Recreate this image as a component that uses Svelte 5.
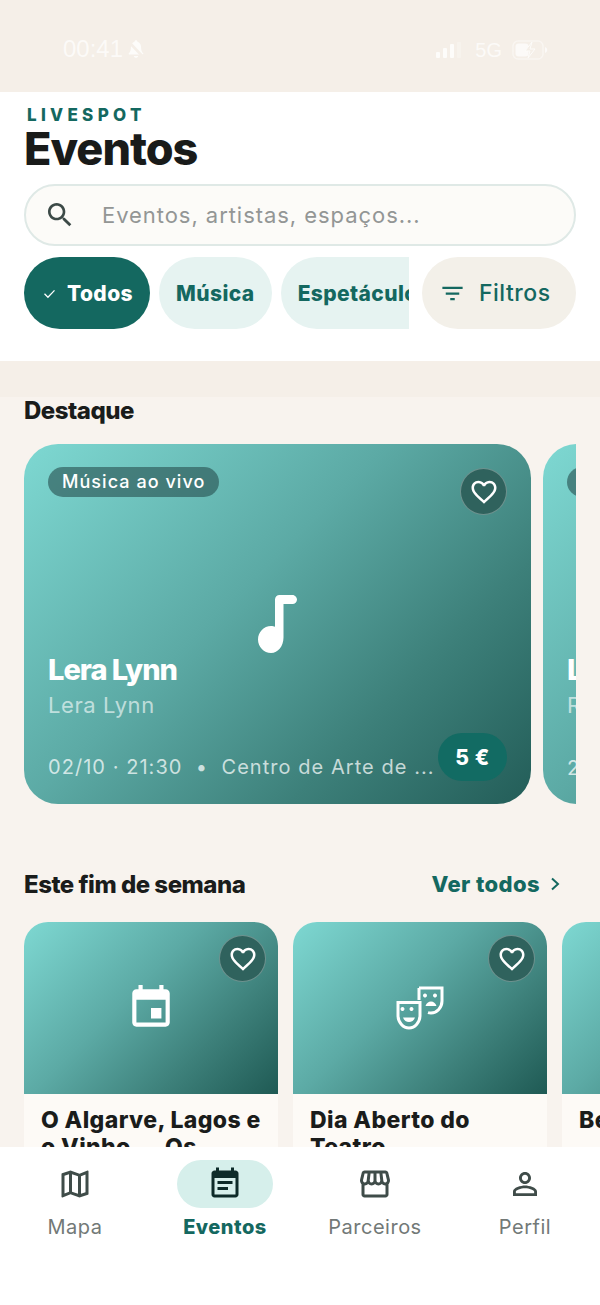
<script>
  const heartPath = "M16.5 3c-1.74 0-3.41.81-4.5 2.09C10.91 3.81 9.24 3 7.5 3 4.42 3 2 5.42 2 8.5c0 3.78 3.4 6.86 8.55 11.54L12 21.35l1.45-1.32C18.6 15.36 22 12.28 22 8.5 22 5.42 19.58 3 16.5 3zm-4.4 15.55l-.1.1-.1-.1C7.14 14.24 4 11.39 4 8.5 4 6.5 5.5 5 7.5 5c1.54 0 3.04.99 3.57 2.36h1.87C13.46 5.99 14.96 5 16.5 5c2 0 3.5 1.5 3.5 3.5 0 2.89-3.14 5.74-7.9 10.05z";
  const navItems = [
    { label: "Mapa", d: "M20.5 3l-.16.03L15 5.1 9 3 3.36 4.9c-.21.07-.36.25-.36.48V20.5c0 .28.22.5.5.5l.16-.03L9 18.9l6 2.1 5.64-1.9c.21-.07.36-.25.36-.48V3.5c0-.28-.22-.5-.5-.5zM10 5.47l4 1.4v11.66l-4-1.4V5.47zm-5 .99l3-1.01v11.7l-3 1.16V6.46zm14 11.08l-3 1.01V6.86l3-1.16v11.84z" },
    { label: "Eventos", active: true, d: "M17 10H7v2h10v-2zm2-7h-1V1h-2v2H8V1H6v2H5c-1.11 0-1.99.9-1.99 2L3 19c0 1.1.89 2 2 2h14c1.1 0 2-.9 2-2V5c0-1.1-.9-2-2-2zm0 16H5V8h14v11zm-5-5H7v2h7v-2z" },
    { label: "Parceiros", d: "M21.9 8.89l-1.05-4.37c-.22-.9-1-1.52-1.91-1.52H5.05c-.9 0-1.69.63-1.9 1.52L2.1 8.89c-.24 1.02-.02 2.06.62 2.88.08.11.19.19.28.29V19c0 1.1.9 2 2 2h14c1.1 0 2-.9 2-2v-6.94c.09-.09.2-.18.28-.28.64-.82.87-1.87.62-2.89zm-2.99-3.9l1.05 4.37c.1.42.01.84-.25 1.17-.14.18-.44.47-.94.47-.61 0-1.14-.49-1.21-1.14L16.98 5l1.93-.01zM13 5h1.96l.54 4.52c.05.39-.07.78-.33 1.07-.22.26-.54.41-.95.41-.67 0-1.22-.59-1.22-1.31V5zM8.49 9.52L9.04 5H11v4.69c0 .72-.55 1.31-1.29 1.31-.34 0-.65-.15-.89-.41-.25-.29-.37-.68-.33-1.07zm-4.45-.16L5.05 5h1.97l-.58 4.86c-.08.65-.6 1.14-1.21 1.14-.49 0-.8-.29-.93-.47-.27-.32-.36-.75-.26-1.17zM5 19v-6.03c.08.01.15.03.23.03.87 0 1.66-.36 2.24-.95.6.6 1.4.95 2.31.95.87 0 1.65-.36 2.23-.93.59.57 1.39.93 2.29.93.84 0 1.64-.35 2.24-.95.58.59 1.37.95 2.24.95.08 0 .15-.02.23-.03V19H5z" },
    { label: "Perfil", d: "M12 5.9c1.16 0 2.1.94 2.1 2.1s-.94 2.1-2.1 2.1S9.9 9.16 9.9 8s.94-2.1 2.1-2.1m0 9c2.97 0 6.1 1.46 6.1 2.1v1.1H5.9V17c0-.64 3.13-2.1 6.1-2.1M12 4C9.79 4 8 5.79 8 8s1.79 4 4 4 4-1.79 4-4-1.79-4-4-4zm0 9c-2.67 0-8 1.34-8 4v3h16v-3c0-2.66-5.33-4-8-4z" }
  ];
</script>

{#snippet heart()}
  <button class="fav" aria-label="Favorito">
    <svg class="heart" viewBox="0 0 24 24"><path d={heartPath} /></svg>
  </button>
{/snippet}

<div class="phone">
  <div class="status">
    <div class="status-left">
      <span class="time">00:41</span>
      <svg class="bell" viewBox="0 0 24 24">
        <path d="M12 2.5c-.9 0-1.5.7-1.6 1.5C7.9 4.8 6.5 7 6.5 9.6c0 3.6-.8 5.6-2.3 7.1-.5.5-.2 1.3.5 1.3h14.6c.7 0 1-.8.5-1.3-1.5-1.5-2.3-3.5-2.3-7.1 0-2.6-1.4-4.8-3.9-5.6-.1-.8-.7-1.5-1.6-1.5zM9.6 19.5c.2 1.2 1.2 2 2.4 2s2.2-.8 2.4-2z" />
        <path class="slash" d="M3 3l18 19" />
      </svg>
    </div>
    <div class="status-right">
      <svg class="signal" viewBox="0 0 26 16">
        <rect x="0" y="10" width="4" height="6" rx="1" />
        <rect x="7" y="6" width="4" height="10" rx="1" />
        <rect x="14" y="2" width="4" height="14" rx="1" />
        <rect x="21" y="0" width="4" height="16" rx="1" opacity=".3" />
      </svg>
      <span class="net">5G</span>
      <svg class="battery" viewBox="0 0 36 20">
        <rect x="1" y="1" width="30" height="18" rx="5" class="batt-outline" />
        <rect x="3.5" y="3.5" width="13" height="13" rx="3" class="batt-fill" />
        <path class="batt-tip" d="M33 7v6c1.4-.4 2.2-1.6 2.2-3S34.400 7.400 33 7z" />
        <path class="batt-bolt" d="M20 2l-7 9h5l-2 7 7-9h-5z" />
      </svg>
    </div>
  </div>

  <header class="head">
    <div class="brand">LIVESPOT</div>
    <h1>Eventos</h1>
    <div class="search">
      <svg class="search-icon" viewBox="0 0 24 24"><path d="M15.500 14h-.79l-.28-.27C15.410 12.590 16 11.110 16 9.500 16 5.910 13.090 3 9.500 3S3 5.910 3 9.500 5.910 16 9.500 16c1.610 0 3.090-.59 4.230-1.570l.27.28v.79l5 4.990L20.490 19l-4.990-5zm-6 0C7.010 14 5 11.990 5 9.500S7.010 5 9.500 5 14 7.010 14 9.500 11.990 14 9.500 14z" /></svg>
      <span class="placeholder">Eventos, artistas, espaços...</span>
    </div>
    <div class="filters">
      <div class="chips">
        <span class="chip on">
          <svg class="check" viewBox="0 0 24 24"><path d="M4 12.500l5.500 5.500L20 7" /></svg>
          Todos
        </span>
        <span class="chip">Música</span>
        <span class="chip">Espetáculos</span>
      </div>
      <span class="filter-btn">
        <svg class="filter-icon" viewBox="0 0 24 24"><path d="M10 18h4v-2h-4v2zM3 6v2h18V6H3zm3 7h12v-2H6v2z" /></svg>
        Filtros
      </span>
    </div>
  </header>
  <div class="band"></div>

  <main class="content">
    <h2 class="first">Destaque</h2>
    <div class="hero-row">
      <article class="hero">
        <span class="badge">Música ao vivo</span>
        <div class="hero-fav">{@render heart()}</div>
        <svg class="note" viewBox="0 0 40 58">
          <path d="M17 4.500c0-2.500 2-4.500 4.500-4.500h13c2.500 0 4.500 2.500 4.500 4.500 0 2.500-2 4.500-4.500 4.500H25.500v33.500C25.500 51 20 58 13 58 6 58 0 52 0 44.500S6 31 13 31c1.500 0 3 .3 4 .8z" />
        </svg>
        <div class="hero-title">Lera Lynn</div>
        <div class="hero-sub">Lera Lynn</div>
        <div class="hero-foot">
          <span class="meta">02/10 · 21:30 &nbsp;•&nbsp; Centro de Arte de ...</span>
          <span class="price">5 €</span>
        </div>
      </article>
      <article class="hero">
        <span class="badge">Rock</span>
        <div class="hero-title">Lera Lynn</div>
        <div class="hero-sub">Rita Lima</div>
        <div class="hero-foot">
          <span class="meta">25/10 · 21:30</span>
        </div>
      </article>
    </div>

    <div class="section-head">
      <h2>Este fim de semana</h2>
      <span class="more">Ver todos
        <svg class="chev" viewBox="0 0 12 16"><path d="M3 2.500L9 8l-6 5.500" /></svg>
      </span>
    </div>

    <div class="row">
      <article class="card">
        <div class="thumb">
          <div class="card-fav">{@render heart()}</div>
          <svg class="thumb-icon" viewBox="0 0 24 24"><path d="M17 12h-5v5h5v-5zM16 1v2H8V1H6v2H5c-1.110 0-1.990.9-1.990 2L3 19c0 1.100.89 2 2 2h14c1.100 0 2-.9 2-2V5c0-1.100-.9-2-2-2h-1V1h-2zm3 18H5V8h14v11z" /></svg>
        </div>
        <div class="card-body">O Algarve, Lagos e o Vinho — Os Sabores</div>
      </article>
      <article class="card">
        <div class="thumb">
          <div class="card-fav">{@render heart()}</div>
          <svg class="masks" viewBox="0 0 48 44">
            <path class="mask-line" d="M2 16.500h22v13c0 6.500-5 12.500-11 12.500S2 36 2 29.500z" />
            <path class="mask-fill" d="M8.500 23a2 2 0 1 0 0 .01zM17.500 23a2 2 0 1 0 0 .01zM7 31.500h12c-1 3-3.500 4.500-6 4.500s-5-1.500-6-4.500z" />
            <path class="mask-line" d="M23 2h23v13c0 6.500-5 12-11 12-1 0-2-.1-3-.4M23 2v12" />
            <path class="mask-fill" d="M31 9.500a2 2 0 1 0 0 .01zM41 9.500a2 2 0 1 0 0 .01zM29.500 20c1-2.800 3-4.500 5.500-4.500s4.500 1.700 5.500 4.500z" />
          </svg>
        </div>
        <div class="card-body">Dia Aberto do Teatro Experimental</div>
      </article>
      <article class="card">
        <div class="thumb"></div>
        <div class="card-body">Bela Noite 3 Vozes</div>
      </article>
    </div>
  </main>

  <nav class="nav">
    {#each navItems as item}
      <div class="nav-item" class:active={item.active}>
        <span class="nav-pill">
          <svg class="nav-icon" viewBox="0 0 24 24"><path d={item.d} /></svg>
        </span>
        <span class="nav-label">{item.label}</span>
      </div>
    {/each}
  </nav>
</div>

<style>
  :global(body) {
    margin: 0;
    background: #f8f3ee;
  }
  .phone {
    width: 600px;
    height: 1305px;
    display: flex;
    flex-direction: column;
    overflow: hidden;
    font-family: Inter, "Noto Sans", sans-serif;
    color: #1a1c1b;
    background: #f8f3ee;
  }

  /* status bar */
  .status {
    height: 92px;
    flex: none;
    background: #f5efe8;
    display: flex;
    justify-content: space-between;
    align-items: flex-start;
    padding: 36px 52px 0 63px;
    box-sizing: border-box;
    color: #fdfcfa;
  }
  .status-left, .status-right {
    display: flex;
    align-items: center;
  }
  .time {
    font-family: "Liberation Sans", sans-serif;
    font-size: 24px;
    line-height: 26px;
    opacity: .9;
  }
  .bell {
    width: 22px;
    height: 24px;
    fill: #fdfcfa;
    margin-left: 2px;
  }
  .slash {
    stroke: #f5efe8;
    stroke-width: 3;
    fill: none;
  }
  .status-right {
    padding-top: 2px;
  }
  .signal {
    width: 26px;
    height: 16px;
    fill: #fdfcfa;
  }
  .net {
    font-family: "Liberation Sans", sans-serif;
    font-size: 20px;
    line-height: 24px;
    margin-left: 13px;
    opacity: .9;
  }
  .battery {
    width: 36px;
    height: 20px;
    margin-left: 10px;
  }
  .batt-outline {
    fill: none;
    stroke: #fdfcfa;
    stroke-opacity: .55;
    stroke-width: 1.500;
  }
  .batt-fill, .batt-tip {
    fill: #fdfcfa;
    opacity: .85;
  }
  .batt-bolt {
    fill: #f5efe8;
    stroke: #fdfcfa;
    stroke-width: 1;
  }

  /* header */
  .head {
    flex: none;
    height: 269px;
    box-sizing: border-box;
    background: #fff;
    padding: 14px 24px 0;
  }
  .brand {
    font-size: 17px;
    line-height: 18px;
    font-weight: 800;
    letter-spacing: 4.300px;
    color: #146860;
    margin-left: 3px;
  }
  h1 {
    margin: 0;
    font-size: 45px;
    line-height: 50px;
    font-weight: 800;
    letter-spacing: -1px;
    color: #191b1a;
  }
  .search {
    margin-top: 10px;
    height: 62px;
    box-sizing: border-box;
    border: 2px solid #dfe9e6;
    border-radius: 31px;
    background: #fcfbf8;
    display: flex;
    align-items: center;
    padding-left: 18px;
  }
  .search-icon {
    width: 32px;
    height: 32px;
    fill: #3c4a47;
    flex: none;
  }
  .placeholder {
    margin-left: 26px;
    font-size: 22px;
    letter-spacing: .95px;
    color: #939695;
  }
  .filters {
    display: flex;
    margin-top: 11px;
    justify-content: space-between;
  }
  .chips {
    width: 385px;
    display: flex;
    gap: 9px;
    overflow: hidden;
  }
  .chip {
    flex: none;
    height: 72px;
    padding: 0 17px;
    border-radius: 36px;
    background: #e6f3f1;
    color: #146860;
    font-size: 21px;
    font-weight: 800;
    letter-spacing: .4px;
    display: flex;
    align-items: center;
  }
  .chip.on {
    background: #146860;
    color: #fff;
    padding: 0 17px 0 18px;
  }
  .check {
    width: 15px;
    height: 15px;
    fill: none;
    stroke: #fff;
    stroke-width: 2;
    margin-right: 10px;
  }
  .filter-btn {
    width: 154px;
    height: 72px;
    box-sizing: border-box;
    border-radius: 36px;
    background: #f3f0e9;
    color: #146860;
    font-size: 23px;
    font-weight: 500;
    letter-spacing: .5px;
    display: flex;
    align-items: center;
    padding-left: 17px;
  }
  .filter-icon {
    width: 27px;
    height: 27px;
    fill: #146860;
    margin-right: 13px;
  }
  .band {
    flex: none;
    height: 36px;
    background: #f5efe8;
  }

  /* content */
  .content {
    flex: 1;
    min-height: 0;
    overflow: hidden;
    padding-left: 24px;
  }
  h2 {
    margin: 0;
    font-size: 24px;
    line-height: 28px;
    font-weight: 800;
    letter-spacing: -.5px;
    color: #1a1c1b;
  }
  .first {
    margin-bottom: 19px;
  }
  .hero-row {
    width: 552px;
    display: flex;
    gap: 12px;
    overflow: hidden;
  }
  .hero {
    flex: none;
    width: 507px;
    height: 360px;
    box-sizing: border-box;
    border-radius: 34px;
    padding: 23px 24px 0;
    position: relative;
    color: #fff;
    background: linear-gradient(135deg, #7ed8d2 0%, #5caaa5 42%, #3d807a 72%, #235d58 100%);
  }
  .badge {
    display: inline-block;
    height: 30px;
    line-height: 30px;
    padding: 0 14px;
    border-radius: 15px;
    background: rgba(40, 80, 80, .62);
    font-size: 18px;
    font-weight: 500;
    letter-spacing: 1.050px;
    vertical-align: top;
  }
  .hero-fav {
    position: absolute;
    top: 24px;
    right: 24px;
  }
  .card-fav {
    position: absolute;
    top: 13px;
    right: 12px;
  }
  .fav {
    display: flex;
    align-items: center;
    justify-content: center;
    width: 47px;
    height: 47px;
    padding: 0;
    box-sizing: border-box;
    border: 1px solid rgba(255, 255, 255, .3);
    border-radius: 50%;
    background: #2f625d;
  }
  .heart {
    width: 30px;
    height: 30px;
    fill: #fff;
  }
  .note {
    position: absolute;
    left: 234px;
    top: 151px;
    width: 40px;
    height: 58px;
    fill: #fff;
  }
  .hero-title {
    margin-top: 155px;
    font-size: 29px;
    line-height: 36px;
    font-weight: 800;
    letter-spacing: -1px;
  }
  .hero-sub {
    margin-top: 2px;
    font-size: 22px;
    line-height: 30px;
    letter-spacing: .6px;
    color: rgba(255, 255, 255, .62);
  }
  .hero-foot {
    position: absolute;
    left: 24px;
    right: 24px;
    bottom: 23px;
    display: flex;
    justify-content: space-between;
    align-items: flex-start;
  }
  .meta {
    margin-top: 21px;
    font-size: 20px;
    line-height: 26px;
    letter-spacing: 1.050px;
    color: rgba(255, 255, 255, .72);
    white-space: nowrap;
  }
  .price {
    width: 69px;
    height: 48px;
    border-radius: 24px;
    background: #126b63;
    font-size: 21px;
    font-weight: 800;
    letter-spacing: .5px;
    display: flex;
    align-items: center;
    justify-content: center;
  }
  .section-head {
    display: flex;
    justify-content: space-between;
    align-items: center;
    margin-top: 67px;
    padding-right: 39px;
  }
  .more {
    font-size: 22px;
    line-height: 28px;
    font-weight: 800;
    letter-spacing: .4px;
    color: #146860;
    display: flex;
    align-items: center;
    margin-top: -3px;
  }
  .chev {
    width: 12px;
    height: 16px;
    fill: none;
    stroke: #146860;
    stroke-width: 2;
    margin-left: 9px;
  }
  .row {
    display: flex;
    gap: 15px;
    margin-top: 23px;
  }
  .card {
    flex: none;
    width: 254px;
    border-radius: 24px 24px 0 0;
    overflow: hidden;
    background: #fdfaf6;
  }
  .thumb {
    height: 172px;
    position: relative;
    display: flex;
    align-items: center;
    justify-content: center;
    background: linear-gradient(135deg, #7ed8d2 0%, #5caaa5 42%, #3d807a 72%, #1f5a54 100%);
  }
  .thumb-icon {
    width: 50px;
    height: 50px;
    fill: #fff;
  }
  .masks {
    width: 48px;
    height: 44px;
  }
  .mask-line {
    fill: none;
    stroke: #fff;
    stroke-width: 3;
  }
  .mask-fill {
    fill: #fff;
  }
  .card-body {
    padding: 13px 17px 0;
    font-size: 23px;
    line-height: 27px;
    font-weight: 800;
    letter-spacing: .4px;
    color: #1a1c1b;
    height: 120px;
    box-sizing: border-box;
  }

  /* bottom nav */
  .nav {
    flex: none;
    height: 158px;
    background: #fff;
    display: flex;
    align-items: flex-start;
    padding-top: 13px;
    box-sizing: border-box;
  }
  .nav-item {
    flex: 1;
    display: flex;
    flex-direction: column;
    align-items: center;
  }
  .nav-pill {
    width: 96px;
    height: 48px;
    border-radius: 24px;
    display: flex;
    align-items: center;
    justify-content: center;
  }
  .active .nav-pill {
    background: #d6efeb;
  }
  .nav-icon {
    width: 36px;
    height: 36px;
    fill: #3f4c49;
  }
  .active .nav-icon {
    fill: #0d2b29;
  }
  .nav-label {
    margin-top: 6px;
    font-size: 20px;
    line-height: 26px;
    letter-spacing: .5px;
    color: #727977;
  }
  .active .nav-label {
    font-weight: 800;
    color: #146860;
  }
</style>
